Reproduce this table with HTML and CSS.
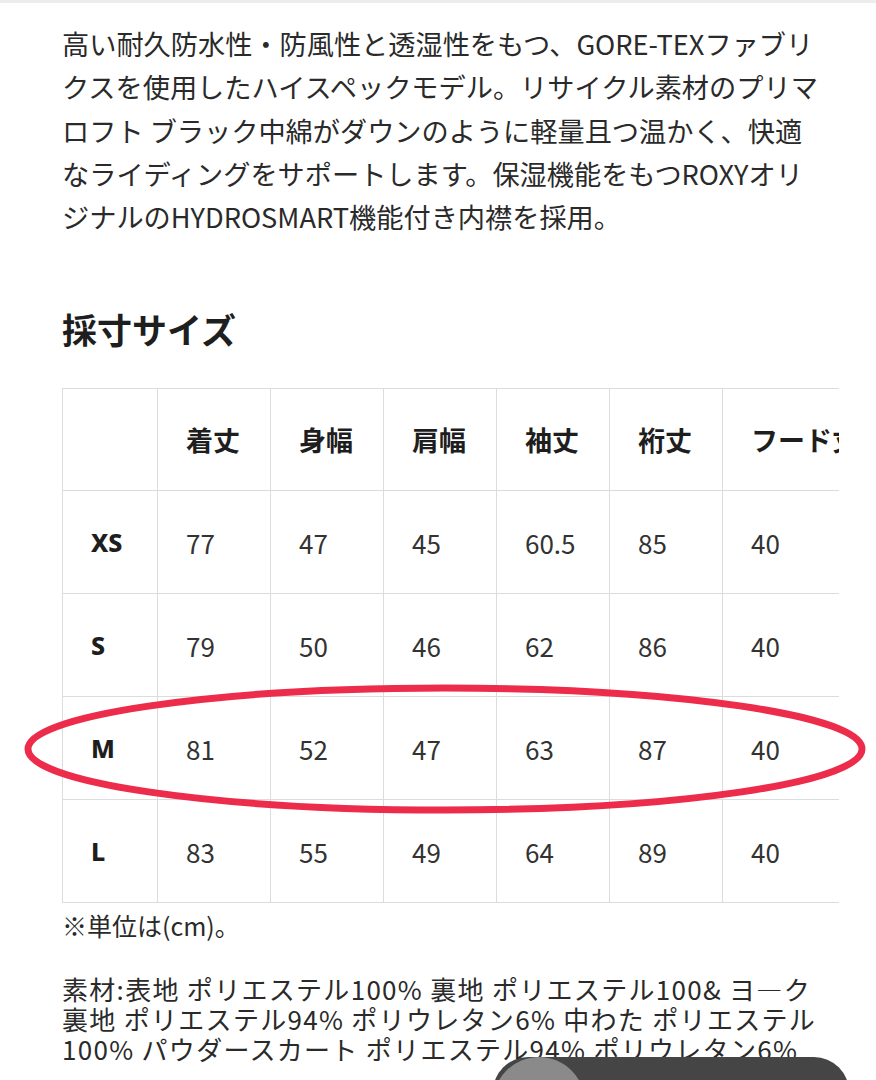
FILE: index.html
```html
<!DOCTYPE html>
<html lang="ja">
<head>
<meta charset="utf-8">
<link rel="stylesheet" href="styles.css">
</head>
<body>
<div class="topbar"></div>
<main class="content">
  <p class="desc">高い耐久防水性・防風性と透湿性をもつ、GORE-TEXファブリ<br>クスを使用したハイスペックモデル。リサイクル素材のプリマ<br>ロフト ブラック中綿がダウンのように軽量且つ温かく、快適<br>なライディングをサポートします。保湿機能をもつROXYオリ<br>ジナルのHYDROSMART機能付き内襟を採用。</p>
  <h2 class="heading">採寸サイズ</h2>
  <div class="table-wrap">
    <table class="size-table">
      <thead>
        <tr><th class="label"></th><th>着丈</th><th>身幅</th><th>肩幅</th><th>袖丈</th><th>裄丈</th><th class="last">フード丈</th></tr>
      </thead>
      <tbody>
        <tr><th class="label">XS</th><td>77</td><td>47</td><td>45</td><td>60.5</td><td>85</td><td class="last">40</td></tr>
        <tr><th class="label">S</th><td>79</td><td>50</td><td>46</td><td>62</td><td>86</td><td class="last">40</td></tr>
        <tr><th class="label">M</th><td>81</td><td>52</td><td>47</td><td>63</td><td>87</td><td class="last">40</td></tr>
        <tr><th class="label">L</th><td>83</td><td>55</td><td>49</td><td>64</td><td>89</td><td class="last">40</td></tr>
      </tbody>
    </table>
  </div>
  <p class="note">※単位は(cm)。</p>
  <p class="material">素材:表地 ポリエステル100% 裏地 ポリエステル100&amp; ヨ―ク<br>裏地 ポリエステル94% ポリウレタン6% 中わた ポリエステル<br>100% パウダースカート ポリエステル94% ポリウレタン6%</p>
</main>
<svg class="circle-mark" width="876" height="160" viewBox="0 0 876 160" aria-hidden="true">
  <ellipse cx="445" cy="80" rx="417" ry="61" fill="none" stroke="#ec2c4a" stroke-width="7"/>
</svg>
<div class="fab"><span class="fab-dot"></span></div>
</body>
</html>
```
FILE: styles.css
```css
html, body {
  margin: 0;
  padding: 0;
  background: #fff;
}
body {
  width: 876px;
  height: 1080px;
  overflow: hidden;
  position: relative;
  font-family: "Noto Sans CJK JP", "Noto Sans", sans-serif;
  color: #222;
}
.topbar {
  height: 3px;
  background: #ececec;
}
.content {
  padding: 19px 38px 0 62px;
}
.desc {
  margin: 0;
  font-size: 27.2px;
  line-height: 43.3px;
  color: #2a2a2a;
  white-space: nowrap;
}
.heading {
  margin: 66px 0 0;
  font-size: 35px;
  line-height: 50px;
  font-weight: 700;
  color: #1e1e1e;
}
.table-wrap {
  margin-top: 34px;
  width: 777px;
  overflow: hidden;
}
.size-table {
  border-collapse: collapse;
  border-spacing: 0;
  white-space: nowrap;
}
.size-table th,
.size-table td {
  border: 1px solid #dcdcdc;
  height: 103px;
  padding: 0 0 0 28px;
  text-align: left;
  vertical-align: middle;
  box-sizing: border-box;
  width: 113px;
  min-width: 113px;
}
.size-table thead th {
  height: 102px;
}
.size-table th {
  font-size: 27px;
  font-weight: 700;
  color: #1e1e1e;
}
.size-table td {
  font-size: 26px;
  font-weight: 400;
  color: #333;
}
.size-table .label {
  width: 95px;
  min-width: 95px;
  font-family: "Noto Sans", "Open Sans", sans-serif;
  font-size: 25px;
  font-weight: 800;
}
.size-table .last {
  width: 150px;
  min-width: 150px;
}
.note {
  margin: 6px 0 0;
  font-size: 25px;
  line-height: 32px;
  color: #2a2a2a;
}
.material {
  margin: 33px 0 0;
  font-size: 26px;
  line-height: 30px;
  letter-spacing: 1.3px;
  color: #2a2a2a;
  white-space: nowrap;
}
.circle-mark {
  position: absolute;
  left: 0;
  top: 669px;
}
.fab {
  position: absolute;
  left: 493px;
  top: 1057px;
  width: 356px;
  height: 70px;
  border-radius: 35px;
  background: #454545;
  overflow: hidden;
}
.fab-dot {
  display: block;
  width: 92px;
  height: 92px;
  border-radius: 50%;
  background: #8a8a8a;
}
```
